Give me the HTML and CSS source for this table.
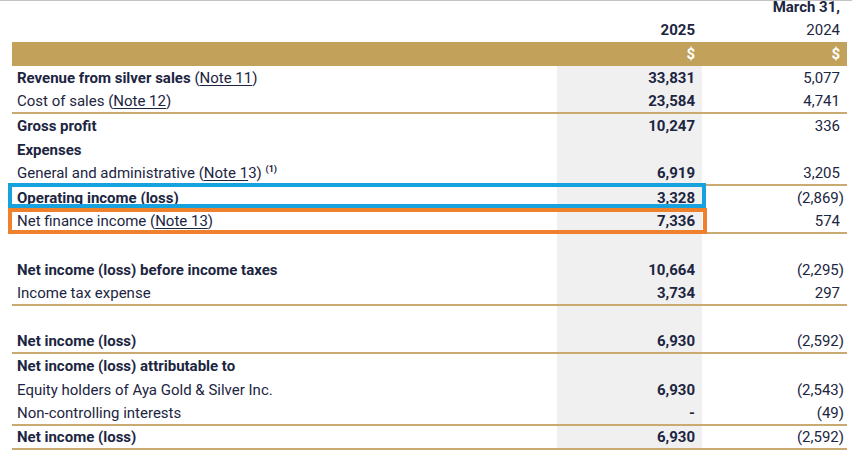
FILE: index.html
```html
<!DOCTYPE html>
<html>
<head>
<meta charset="utf-8">
<link rel="stylesheet" href="styles.css">
</head>
<body>
<div class="topline"></div>
<div class="table">
  <div class="row head1"><div></div><div></div><div class="num b">March 31,</div></div>
  <div class="row head2"><div></div><div class="num b c1">2025</div><div class="num">2024</div></div>
  <div class="row gold"><div></div><div class="num c1">$</div><div class="num">$</div></div>
  <div class="row"><div class="lbl"><b>Revenue from silver sales</b> (<u>Note 11</u>)</div><div class="num b c1 g">33,831</div><div class="num">5,077</div></div>
  <div class="row line"><div class="lbl">Cost of sales (<u>Note 12</u>)</div><div class="num b c1 g">23,584</div><div class="num">4,741</div></div>
  <div class="row"><div class="lbl b">Gross profit</div><div class="num b c1 g">10,247</div><div class="num">336</div></div>
  <div class="row"><div class="lbl b">Expenses</div><div class="num c1 g"></div><div class="num"></div></div>
  <div class="row line"><div class="lbl">General and administrative (<u>Note 1</u>3) <sup>(1)</sup></div><div class="num b c1 g">6,919</div><div class="num">3,205</div></div>
  <div class="row mark blue"><div class="lbl b">Operating income (loss)</div><div class="num b c1 g">3,328</div><div class="num paren">(2,869)</div></div>
  <div class="row line mark orange"><div class="lbl">Net finance income (<u>Note 13</u>)</div><div class="num b c1 g">7,336</div><div class="num">574</div></div>
  <div class="row"><div class="lbl"></div><div class="num c1 g"></div><div class="num"></div></div>
  <div class="row"><div class="lbl b">Net income (loss) before income taxes</div><div class="num b c1 g">10,664</div><div class="num paren">(2,295)</div></div>
  <div class="row line"><div class="lbl">Income tax expense</div><div class="num b c1 g">3,734</div><div class="num">297</div></div>
  <div class="row"><div class="lbl"></div><div class="num c1 g"></div><div class="num"></div></div>
  <div class="row line"><div class="lbl b">Net income (loss)</div><div class="num b c1 g">6,930</div><div class="num paren">(2,592)</div></div>
  <div class="row"><div class="lbl b">Net income (loss) attributable to</div><div class="num c1 g"></div><div class="num"></div></div>
  <div class="row"><div class="lbl">Equity holders of Aya Gold &amp; Silver Inc.</div><div class="num b c1 g">6,930</div><div class="num paren">(2,543)</div></div>
  <div class="row line"><div class="lbl">Non-controlling interests</div><div class="num b c1 g">-</div><div class="num paren">(49)</div></div>
  <div class="row line"><div class="lbl b">Net income (loss)</div><div class="num b c1 g">6,930</div><div class="num paren">(2,592)</div></div>
</div>
</body>
</html>
```
FILE: styles.css
```css
html, body {
  margin: 0;
  padding: 0;
  background: #ffffff;
}
body {
  font-family: Roboto, "Liberation Sans", sans-serif;
  font-size: 15px;
  color: #1c2541;
  width: 852px;
  height: 450px;
  overflow: hidden;
}
.topline {
  height: 1px;
  background: #c4c4c4;
}
.table {
  margin-left: 12px;
  width: 835px;
}
.row {
  display: grid;
  grid-template-columns: 545px 145px 145px;
  height: 24px;
  line-height: 24px;
  box-sizing: border-box;
  position: relative;
}
.row.head1 {
  height: 11px;
  line-height: 11px;
  padding-top: 1px;
  box-sizing: content-box;
}
.row.head2 {
  height: 29px;
  padding-top: 5px;
}
.row.gold {
  background: #c2a15b;
  color: #ffffff;
  font-weight: 700;
}
.row.line {
  border-bottom: 2px solid #c9ab72;
  line-height: 22px;
}
.lbl {
  padding-left: 5px;
  white-space: nowrap;
}
.num {
  text-align: right;
  padding-right: 7px;
  white-space: nowrap;
}
.num.c1 {
  padding-right: 7px;
}
.num.paren {
  padding-right: 3px;
}
.g {
  background: #f0f0f0;
}
.b {
  font-weight: 700;
}
u {
  text-decoration: underline;
  text-underline-offset: 2px;
  text-decoration-thickness: 1px;
}
sup {
  font-size: 9px;
  font-weight: 700;
  line-height: 0;
  vertical-align: 6px;
}
.mark::after {
  content: "";
  position: absolute;
  left: -4px;
  width: 698px;
  top: -3px;
  height: 25px;
  box-sizing: border-box;
  border: 4px solid #17a1dd;
  pointer-events: none;
}
.mark.orange::after {
  border-color: #f0812c;
  top: -2px;
  height: 26px;
  width: 699px;
}
```
